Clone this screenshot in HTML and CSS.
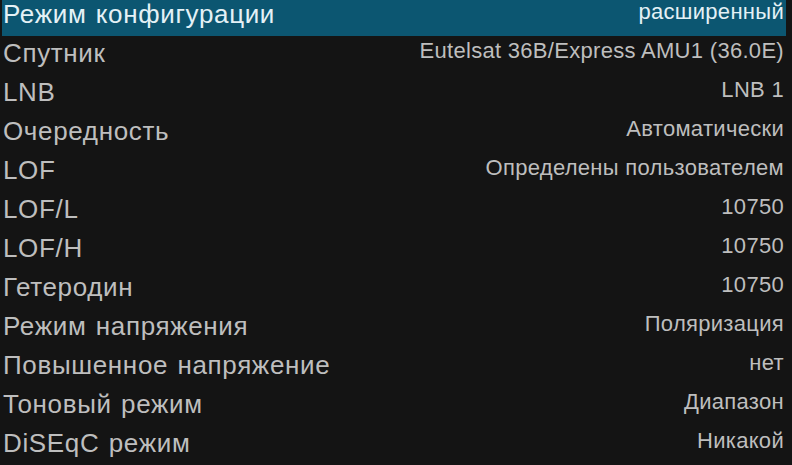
FILE: index.html
```html
<!DOCTYPE html>
<html lang="ru">
<head>
<meta charset="utf-8">
<link rel="stylesheet" href="styles.css">
</head>
<body>
<div class="list">
  <div class="row selected"><span class="label">Режим конфигурации</span><span class="value">расширенный</span></div>
  <div class="row"><span class="label">Спутник</span><span class="value">Eutelsat 36B/Express AMU1 (36.0E)</span></div>
  <div class="row"><span class="label">LNB</span><span class="value">LNB 1</span></div>
  <div class="row"><span class="label">Очередность</span><span class="value">Автоматически</span></div>
  <div class="row"><span class="label">LOF</span><span class="value">Определены пользователем</span></div>
  <div class="row"><span class="label">LOF/L</span><span class="value">10750</span></div>
  <div class="row"><span class="label">LOF/H</span><span class="value">10750</span></div>
  <div class="row"><span class="label">Гетеродин</span><span class="value">10750</span></div>
  <div class="row"><span class="label">Режим напряжения</span><span class="value">Поляризация</span></div>
  <div class="row"><span class="label">Повышенное напряжение</span><span class="value">нет</span></div>
  <div class="row"><span class="label">Тоновый режим</span><span class="value">Диапазон</span></div>
  <div class="row"><span class="label">DiSEqC режим</span><span class="value">Никакой</span></div>
</div>
</body>
</html>
```
FILE: styles.css
```css
html, body {
  margin: 0;
  padding: 0;
  background: #141414;
  height: 100%;
  overflow: hidden;
}
body {
  font-family: "Liberation Sans", Arial, sans-serif;
}
.list {
  margin-left: 2px;
  width: 784px;
  display: flex;
  flex-direction: column;
  gap: 3px;
}
.row {
  height: 36px;
  flex: 0 0 36px;
  display: flex;
  justify-content: space-between;
  align-items: flex-start;
  padding: 0 2px 0 1px;
  color: #bebebe;
}
.row.selected {
  background: #0c5671;
  color: #e4f1f6;
}
.label {
  font-size: 26px;
  line-height: 28px;
  letter-spacing: 0.65px;
  word-spacing: 1.5px;
  white-space: nowrap;
}
.value {
  font-size: 22px;
  line-height: 24px;
  letter-spacing: 0.3px;
  white-space: nowrap;
}
```
